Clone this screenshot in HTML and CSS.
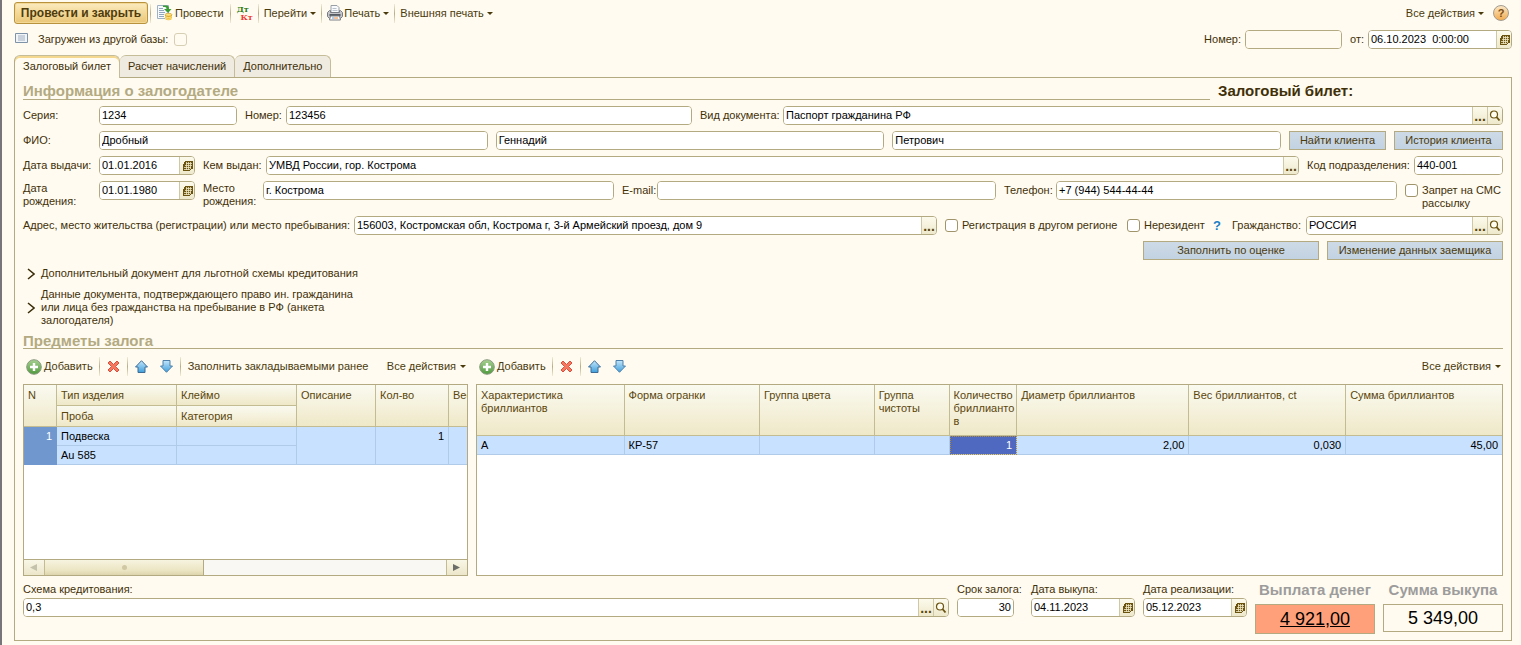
FILE: index.html
```html
<!DOCTYPE html>
<html lang="ru">
<head>
<meta charset="utf-8">
<title>Залоговый билет</title>
<link rel="stylesheet" href="styles.css">
</head>
<body>
<svg class="defs" aria-hidden="true">
  <defs>
    <linearGradient id="g-green" x1="0" y1="0" x2="0" y2="1"><stop offset="0" stop-color="#a9d192"/><stop offset="1" stop-color="#4f9a3c"/></linearGradient>
    <linearGradient id="g-blue" x1="0" y1="0" x2="0" y2="1"><stop offset="0" stop-color="#c3e6fb"/><stop offset="1" stop-color="#3f9edb"/></linearGradient>
  </defs>
  <symbol id="i-cal" viewBox="0 0 11 12"><path fill="#6b5310" d="M3 1h8v8H9v1H8v1H1V4h1V2h1z"/><path stroke="#efe7c4" d="M4 3.500h6M3 5.500h7M2 7.500h7M2 9.500h6M4.500 2v8M6.500 2v8M8.500 2v7" stroke-width=".8"/></symbol>
  <symbol id="i-mag" viewBox="0 0 12 12"><circle cx="5" cy="4.500" r="3.500" fill="#fffdf0" stroke="#6b5310" stroke-width="1.200"/><path d="M7.500 7l3 3.500" stroke="#6b5310" stroke-width="1.900"/></symbol>
  <symbol id="i-add" viewBox="0 0 16 16"><circle cx="8" cy="8" r="7.300" fill="url(#g-green)" stroke="#8a9a80"/><path d="M8 4v8M4 8h8" stroke="#fff" stroke-width="2.400"/></symbol>
  <symbol id="i-del" viewBox="0 0 13 13"><path d="M1 3l2-2 3.500 3.500L10 1l2 2-3.500 3.500L12 10l-2 2-3.500-3.500L3 12l-2-2 3.500-3.500z" fill="#f4775f" stroke="#d9503f"/></symbol>
  <symbol id="i-up" viewBox="0 0 13 13"><path d="M6.500 .700L12.500 7H10v5.500H3V7H.500z" fill="url(#g-blue)" stroke="#3d6c96" stroke-linejoin="round"/></symbol>
  <symbol id="i-down" viewBox="0 0 13 13"><path d="M6.500 12.300L12.500 6H10V.500H3V6H.500z" fill="url(#g-blue)" stroke="#4d80aa" stroke-linejoin="round"/></symbol>
  <symbol id="i-chev" viewBox="0 0 8 12"><path d="M1 1l6 5-6 5" fill="none" stroke="#3a2c08" stroke-width="1.500"/></symbol>
  <symbol id="i-post" viewBox="0 0 16 16"><path d="M.500 .500h11v13H.500z" fill="#f7fafc" stroke="#9fb2c3"/><path d="M2 3.500h4M2 5.500h5M2 7.500h6M2 9.500h5M2 11.500h5" stroke="#8fa6bc"/><path d="M6 .500h3.500q2.500 0 2.500 3.500h2.500l-3.500 4-4-4h2.500Q9.500 2 8 2H6z" fill="#3b9b35"/><path d="M8 10v4q3.500 2.500 7 0v-4z" fill="#eab52e"/><ellipse cx="11.500" cy="9.800" rx="3.500" ry="1.500" fill="#fbe27a" stroke="#c98f1c" stroke-width=".6"/><path d="M8 11.800q3.500 1.600 7 0M8 13.500q3.500 1.600 7 0" fill="none" stroke="#fff0a0" stroke-width=".8"/></symbol>
  <symbol id="i-print" viewBox="0 0 16 16"><path d="M4 .500h6l2 2V8H4z" fill="#f8fafc" stroke="#9a9ea5"/><path d="M5.500 3.500h4M5.500 5.500h5" stroke="#b9c2cc"/><path d="M.500 7.500l2-2h1v2h9v-2h1l2 2v4l-2 2h-11l-2-2z" fill="#c3c5ca" stroke="#777b82"/><path d="M2.500 9h11v2h-11z" fill="#565a62"/><path d="M3.500 11h9l1 4h-11z" fill="#fff" stroke="#7d8187"/><path d="M5 13h2" stroke="#5d9adf"/><path d="M7 13h4" stroke="#ee8a3a"/></symbol>
  <symbol id="i-list" viewBox="0 0 13 10"><path d="M.5.500h12v9H.5z" fill="#f2f5f8" stroke="#7e93a8"/><path d="M3 3h7M3 5h7M3 7h7" stroke="#8da0b2" stroke-width=".8"/></symbol>
  <symbol id="i-prev" viewBox="0 0 8 7"><path d="M7 0v7L0 3.500z" fill="#c5c2ac"/></symbol>
  <symbol id="i-next" viewBox="0 0 8 7"><path d="M0 0v7l7-3.500z" fill="#6c6c68"/></symbol>
</svg>

<header class="toolbar">
  <button class="primary">Провести и закрыть</button>
  <i class="sep"></i>
  <button class="cmd"><svg class="ic16"><use href="#i-post"/></svg>Провести</button>
  <i class="sep"></i>
  <button class="dtkt"><span class="dt">Дт</span><span class="kt">Кт</span></button>
  <i class="sep"></i>
  <button class="cmd menu">Перейти</button>
  <i class="sep"></i>
  <button class="cmd menu"><svg class="ic16"><use href="#i-print"/></svg>Печать</button>
  <i class="sep"></i>
  <button class="cmd menu">Внешняя печать</button>
  <button class="cmd menu push">Все действия</button>
  <button class="help">?</button>
</header>

<div class="docline">
  <svg class="listicon"><use href="#i-list"/></svg>
  <label class="check loaded">Загружен из другой базы:<input type="checkbox" disabled></label>
  <div class="field push"><label for="num">Номер:</label><span class="box off docnum"><input id="num" readonly></span></div>
  <div class="field"><label for="dt">от:</label><span class="box docdate"><input id="dt" value="06.10.2023  0:00:00"><button aria-label="Календарь"><svg class="cal"><use href="#i-cal"/></svg></button></span></div>
</div>

<nav class="tabs">
  <button class="tab active">Залоговый билет</button><button class="tab">Расчет начислений</button><button class="tab">Дополнительно</button>
</nav>

<main class="panel">
  <div class="titles">
    <h2 class="section">Информация о залогодателе</h2>
    <h2 class="ticket">Залоговый билет:</h2>
  </div>

  <div class="row">
    <div class="field serial"><label class="l76" for="ser">Серия:</label><span class="box"><input id="ser" value="1234"></span></div>
    <div class="field g447"><label class="l41" for="pnum">Номер:</label><span class="box"><input id="pnum" value="123456"></span></div>
    <div class="field g803"><label class="l83" for="kind">Вид документа:</label><span class="box"><input id="kind" value="Паспорт гражданина РФ"><button class="dots" aria-label="Выбрать">...</button><button aria-label="Открыть"><svg class="mag"><use href="#i-mag"/></svg></button></span></div>
  </div>

  <div class="row">
    <div class="field name"><label class="l76" for="fam">ФИО:</label><span class="box"><input id="fam" value="Дробный"></span></div>
    <div class="field grow"><span class="box"><input aria-label="Имя" value="Геннадий"></span></div>
    <div class="field grow"><span class="box"><input aria-label="Отчество" value="Петрович"></span></div>
    <button class="blue find">Найти клиента</button>
    <button class="blue hist">История клиента</button>
  </div>

  <div class="row">
    <div class="field date"><label class="l76" for="iss">Дата выдачи:</label><span class="box"><input id="iss" value="01.01.2016"><button aria-label="Календарь"><svg class="cal"><use href="#i-cal"/></svg></button></span></div>
    <div class="field grow"><label class="l63" for="by">Кем выдан:</label><span class="box"><input id="by" value="УМВД России, гор. Кострома"><button class="dots" aria-label="Выбрать">...</button></span></div>
    <div class="field code"><label for="code">Код подразделения:</label><span class="box"><input id="code" value="440-001"></span></div>
  </div>

  <div class="row tall">
    <div class="field date"><label class="l76" for="born">Дата<br>рождения:</label><span class="box"><input id="born" value="01.01.1980"><button aria-label="Календарь"><svg class="cal"><use href="#i-cal"/></svg></button></span></div>
    <div class="field g411"><label class="l60" for="place">Место<br>рождения:</label><span class="box"><input id="place" value="г. Кострома"></span></div>
    <div class="field g374"><label class="l35 mid" for="mail">E-mail:</label><span class="box"><input id="mail"></span></div>
    <div class="field g393"><label class="l52 mid" for="tel">Телефон:</label><span class="box"><input id="tel" value="+7 (944) 544-44-44"></span></div>
    <label class="check sms"><input type="checkbox"><span>Запрет на СМС<br>рассылку</span></label>
  </div>

  <div class="row">
    <div class="field grow"><label class="l331" for="addr">Адрес, место жительства (регистрации) или место пребывания:</label><span class="box"><input id="addr" value="156003, Костромская обл, Кострома г, 3-й Армейский проезд, дом 9"><button class="dots" aria-label="Выбрать">...</button></span></div>
    <label class="check region"><input type="checkbox">Регистрация в другом регионе</label>
    <label class="check nonres"><input type="checkbox">Нерезидент</label>
    <a class="hint" href="#">?</a>
    <div class="field citizen"><label class="l74" for="cit">Гражданство:</label><span class="box"><input id="cit" value="РОССИЯ"><button class="dots" aria-label="Выбрать">...</button><button aria-label="Открыть"><svg class="mag"><use href="#i-mag"/></svg></button></span></div>
  </div>

  <div class="row end">
    <button class="blue wide">Заполнить по оценке</button>
    <button class="blue wide">Изменение данных заемщика</button>
  </div>

  <div class="expanders">
    <button class="expander"><svg class="chev"><use href="#i-chev"/></svg><span>Дополнительный документ для льготной схемы кредитования</span></button>
    <button class="expander"><svg class="chev"><use href="#i-chev"/></svg><span>Данные документа, подтверждающего право ин. гражданина<br>или лица без гражданства на пребывание в РФ (анкета<br>залогодателя)</span></button>
  </div>

  <h2 class="section items">Предметы залога</h2>

  <div class="lists">
    <section class="list goods">
      <div class="bar">
        <button class="cmd add"><svg class="ic16"><use href="#i-add"/></svg>Добавить</button>
        <i class="sep"></i>
        <button class="icon" aria-label="Удалить"><svg class="ic13"><use href="#i-del"/></svg></button>
        <i class="sep"></i>
        <button class="icon" aria-label="Вверх"><svg class="ic13"><use href="#i-up"/></svg></button>
        <button class="icon" aria-label="Вниз"><svg class="ic13"><use href="#i-down"/></svg></button>
        <i class="sep"></i>
        <button class="cmd">Заполнить закладываемыми ранее</button>
        <button class="cmd menu push">Все действия</button>
      </div>
      <div class="frame">
        <div class="view">
          <table class="t-goods">
            <colgroup><col class="c-n"><col class="c-type"><col class="c-type"><col class="c-desc"><col class="c-qty"><col class="c-w"></colgroup>
            <thead>
              <tr><th rowspan="2">N</th><th>Тип изделия</th><th>Клеймо</th><th rowspan="2">Описание</th><th rowspan="2">Кол-во</th><th rowspan="2">Вес</th></tr>
              <tr><th>Проба</th><th>Категория</th></tr>
            </thead>
            <tbody>
              <tr><td rowspan="2" class="rown">1</td><td>Подвеска</td><td></td><td rowspan="2"></td><td rowspan="2" class="num">1</td><td rowspan="2"></td></tr>
              <tr><td>Au 585</td><td></td></tr>
            </tbody>
          </table>
        </div>
        <div class="scroll">
          <button aria-label="Влево"><svg class="arr"><use href="#i-prev"/></svg></button>
          <div class="track"><div class="thumb"><i></i></div></div>
          <button aria-label="Вправо"><svg class="arr"><use href="#i-next"/></svg></button>
        </div>
      </div>
    </section>

    <section class="list gems">
      <div class="bar">
        <button class="cmd add"><svg class="ic16"><use href="#i-add"/></svg>Добавить</button>
        <i class="sep"></i>
        <button class="icon" aria-label="Удалить"><svg class="ic13"><use href="#i-del"/></svg></button>
        <i class="sep"></i>
        <button class="icon" aria-label="Вверх"><svg class="ic13"><use href="#i-up"/></svg></button>
        <button class="icon" aria-label="Вниз"><svg class="ic13"><use href="#i-down"/></svg></button>
        <button class="cmd menu push">Все действия</button>
      </div>
      <div class="frame">
        <div class="view">
          <table class="t-gems">
            <colgroup><col class="k1"><col class="k2"><col class="k3"><col class="k4"><col class="k5"><col class="k6"><col class="k7"><col class="k8"></colgroup>
            <thead><tr><th>Характеристика<br>бриллиантов</th><th>Форма огранки</th><th>Группа цвета</th><th>Группа<br>чистоты</th><th>Количество<br>бриллианто<br>в</th><th>Диаметр бриллиантов</th><th>Вес бриллиантов, ct</th><th>Сумма бриллиантов</th></tr></thead>
            <tbody><tr><td>А</td><td>КР-57</td><td></td><td></td><td class="num cur">1</td><td class="num">2,00</td><td class="num">0,030</td><td class="num">45,00</td></tr></tbody>
          </table>
        </div>
      </div>
    </section>
  </div>

  <footer class="bottom">
    <div class="stack grow"><label for="plan">Схема кредитования:</label><span class="box"><input id="plan" value="0,3"><button class="dots" aria-label="Выбрать">...</button><button aria-label="Открыть"><svg class="mag"><use href="#i-mag"/></svg></button></span></div>
    <div class="stack term"><label for="term">Срок залога:</label><span class="box"><input id="term" class="right" value="30"></span></div>
    <div class="stack due"><label for="due">Дата выкупа:</label><span class="box"><input id="due" value="04.11.2023"><button aria-label="Календарь"><svg class="cal"><use href="#i-cal"/></svg></button></span></div>
    <div class="stack due"><label for="sale">Дата реализации:</label><span class="box"><input id="sale" value="05.12.2023"><button aria-label="Календарь"><svg class="cal"><use href="#i-cal"/></svg></button></span></div>
    <div class="total pay"><span>Выплата денег</span><a href="#">4 921,00</a></div>
    <div class="total"><span>Сумма выкупа</span><output>5 349,00</output></div>
  </footer>
</main>
</body>
</html>
```

FILE: styles.css
```css
* { box-sizing: border-box; }

body {
  margin: 0;
  min-height: 100vh;
  display: flex;
  flex-direction: column;
  padding: 2px 9px 4px 12px;
  border-left: 2px solid #77757a;
  background: #fffbf0;
  color: #3f3008;
  font: 11px/13px "Liberation Sans", Arial, sans-serif;
}

button, input { font: inherit; color: inherit; }
button { margin: 0; padding: 0; border: 0; background: none; white-space: nowrap; }
h2 { margin: 0; font-size: 15px; line-height: 16px; }
label { white-space: nowrap; }
.defs { position: absolute; width: 0; height: 0; }
svg { display: block; flex: none; }
.ic16 { width: 16px; height: 16px; }
.ic13 { width: 13px; height: 13px; }
.cal { width: 11px; height: 12px; }
.mag { width: 12px; height: 12px; }
.push { margin-left: auto; }
.grow { flex: 1 1 0; }

/* command bars */
.toolbar { display: flex; align-items: center; height: 22px; }
.primary {
  width: 134px;
  height: 22px;
  border: 1px solid #b8923c;
  border-radius: 3px;
  background: linear-gradient(#fbecc0, #f1d592 60%, #e9c678);
  box-shadow: inset 0 0 0 1px #f3d896;
  color: #4f3c0c;
  font-size: 12px;
  font-weight: bold;
}
.sep { flex: none; width: 1px; height: 19px; margin: 0 6px 0 2px; background: linear-gradient(#f2ecd6, #b7af87, #f2ecd6); }
.cmd { display: flex; align-items: center; gap: 2px; height: 20px; color: #4a3a0c; }
.toolbar .cmd + .sep { margin-left: 6px; }
.toolbar .menu + .sep { margin-left: 5px; }
.toolbar .menu { gap: 1px; }
.toolbar .menu + .sep, .dtkt + .sep { margin-right: 5px; }
.dtkt + .sep { margin-left: 5px; }
.menu::after { content: ""; margin-left: 2px; border: 3px solid transparent; border-top-color: #4a3a0c; border-bottom: 0; }
.dtkt { display: flex; flex-direction: column; width: 16px; font: bold 8px/8px "DejaVu Serif", serif; }
.dt { color: #2c7a10; text-align: left; }
.kt { color: #ee3b35; text-align: right; }
.help {
  width: 16px;
  height: 16px;
  margin: 0 3px 0 9px;
  border: 1px solid #a39b8e;
  border-radius: 50%;
  background: linear-gradient(#fbe6c4, #f3ac50);
  font-weight: bold;
  line-height: 14px;
  color: #7b4d12;
}

.docline { display: flex; align-items: center; gap: 8px; margin-top: 6px; height: 19px; }
.listicon { width: 13px; height: 10px; margin: 0 2px 4px 1px; }
.docline .field label { margin-right: 4px; }
.docline .loaded { gap: 6px; }
.docnum { width: 97px; }
.docdate { width: 144px; }

/* fields */
.field { display: flex; min-width: 0; align-items: center; }
.box {
  display: flex;
  flex: 1 1 0;
  min-width: 0;
  height: 19px;
  overflow: hidden;
  border: 1px solid #b3aa82;
  border-radius: 4px;
  background: #fff;
}
.box.docnum, .box.docdate { flex: none; }
.box.off, .box.off input { background: #fffbf0; }
.box input { flex: 1 1 0; width: 0; min-width: 0; padding: 0 2px; border: 0; outline: 0; background: #fff; color: #000; white-space: pre; }
.box input.right { text-align: right; }
.box button {
  display: flex;
  align-items: center;
  justify-content: center;
  width: 15px;
  border-left: 1px solid #cfc8a6;
  background: linear-gradient(#fcfaec, #eee9cc);
  color: #5b460c;
}
.box .dots { align-items: flex-end; font-size: 14px; line-height: 16px; font-weight: bold; }
.check { display: flex; align-items: center; gap: 4px; }
.check input {
  appearance: none;
  flex: none;
  width: 13px;
  height: 13px;
  margin: 0;
  border: 1px solid #a0956a;
  border-radius: 3px;
  background: #fff;
}
.check input:disabled { border-color: #d6cfb4; background: #fffbf0; }

.tabs { display: flex; margin-top: 6px; height: 22px; }
.tab {
  padding: 0 8px;
  border: 1px solid #c5bd98;
  border-bottom: 0;
  border-left: 0;
  border-radius: 6px 6px 0 0;
  background: #f0ebe0;
}
.tab.active {
  height: 23px;
  padding-bottom: 1px;
  z-index: 1;
  border-left: 1px solid #b3aa82;
  background: #fffbf0;
  box-shadow: inset 0 2px #f5d890;
}

.panel {
  flex: 1;
  display: flex;
  flex-direction: column;
  gap: 6px;
  padding: 0 8px 6px;
  border: 1px solid #b3aa82;
}
.titles { display: flex; gap: 8px; height: 22px; }
.section { flex: 1; border-bottom: 1px solid #b3aa82; color: #b3aa82; }
.titles h2 { padding-top: 5px; }
.ticket { width: 285px; color: #3f3008; }
.section.items { flex: none; height: 15px; line-height: 14px; }

.row { display: flex; gap: 8px; min-height: 19px; }
.row.tall { min-height: 29px; }
.tall .field, .tall .check { align-items: flex-start; }
.tall label { padding-top: 1px; }
.tall .mid { padding-top: 3px; }
.row.end { justify-content: flex-end; }
.l35 { width: 35px; } .l41 { width: 41px; } .l52 { width: 52px; } .l60 { width: 60px; }
.l63 { width: 63px; } .l74 { width: 74px; } .l76 { width: 76px; } .l83 { width: 83px; } .l331 { width: 331px; }
.serial { width: 214px; }
.date { width: 172px; }
.code { width: 196px; }
.code label { width: 107px; }
.citizen { width: 271px; }
.g447 { flex: 447 1 0; } .g803 { flex: 803 1 0; }
.g411 { flex: 411 1 0; } .g374 { flex: 374 1 0; } .g393 { flex: 393 1 0; }
.name { flex: 1 1 76px; }
.row .sms { width: 98px; padding-top: 3px; }
.region { width: 174px; }
.nonres { width: 78px; }
.hint { width: 11px; color: #1b7fc4; font-size: 13px; font-weight: bold; line-height: 19px; text-decoration: none; }
.blue {
  height: 19px;
  border: 1px solid #b3aa82;
  background: linear-gradient(#cddae6, #c3d2e2);
  color: #4a3a0c;
}
.find { width: 97px; }
.hist { width: 109px; }
.wide { width: 176px; }

.expanders { display: flex; flex-direction: column; gap: 8px; height: 62px; padding: 1px 0 0 4px; }
.expander { display: flex; align-items: center; gap: 6px; text-align: left; color: #3f3008; }
.chev { width: 8px; height: 12px; }

/* lists */
.lists { flex: 1; display: flex; gap: 8px; }
.list { display: flex; flex-direction: column; gap: 6px; min-width: 0; }
.goods { width: 445px; flex: none; }
.gems { flex: 1; }
.bar { display: flex; align-items: center; height: 23px; padding: 0 2px 0 3px; }
.icon { width: 13px; height: 13px; margin-right: 12px; }
.icon + .sep { margin-left: -5px; }
.bar .sep { margin-right: 7px; }
.bar .add + .sep { margin-left: 6px; }
.frame { flex: 1; display: flex; flex-direction: column; border: 1px solid #b3aa82; background: #fff; }
.view { flex: 1; overflow: hidden; }
table { table-layout: fixed; border-collapse: separate; border-spacing: 0; }
.t-goods { width: 464px; }
.t-gems { width: 100%; }
th {
  padding: 4px 4px 0;
  border-right: 1px solid #c3bb92;
  border-bottom: 1px solid #c3bb92;
  background: linear-gradient(#fafaf0, #efe8c8);
  color: #5b460c;
  font-weight: normal;
  text-align: left;
  vertical-align: top;
  white-space: nowrap;
}
td {
  padding: 3px 4px 0;
  border-right: 1px solid #b0cbe9;
  border-bottom: 1px solid #b0cbe9;
  background: #c8e1ff;
  color: #000;
  vertical-align: top;
}
.t-goods th { height: 21px; }
.t-goods td { height: 19px; }
.t-gems th { height: 51px; }
.t-gems td { height: 19px; }
.t-gems th:last-child, .t-gems td:last-child { border-right: 0; }
.num, .rown { text-align: right; }
.rown { background: #7098cf; color: #fff; border-color: #7098cf; }
.cur { background: #5069c0; color: #fff; outline: 1px dotted #b08a3a; outline-offset: -1px; }
.c-n { width: 33px; } .c-type { width: 120px; } .c-desc { width: 79px; } .c-qty { width: 73px; } .c-w { width: 39px; }
.k1 { width: 14.4%; } .k2 { width: 13.2%; } .k3 { width: 11.2%; } .k4 { width: 7.3%; }
.k5 { width: 6.6%; } .k6 { width: 16.8%; } .k7 { width: 15.3%; } .k8 { width: 15.2%; }

.scroll { display: flex; height: 16px; border-top: 1px solid #b3aa82; background: #faf8f2; }
.scroll button { display: flex; align-items: center; justify-content: center; width: 21px; background: linear-gradient(#f8f6e6, #ece6ca); }
.scroll button:first-child { border-right: 1px solid #c3bb92; }
.scroll button:last-child { border-left: 1px solid #c3bb92; }
.arr { width: 8px; height: 7px; }
.track { flex: 1; }
.thumb { display: flex; align-items: center; justify-content: center; width: 159px; height: 15px; border-right: 1px solid #b3aa82; background: linear-gradient(#f6f3df, #ece5c3 70%, #ddd5ac); }
.thumb i { width: 5px; height: 5px; border-radius: 50%; background: #cfc8a2; }

/* totals */
.bottom { display: flex; gap: 8px; height: 52px; }
.stack { display: flex; flex-direction: column; gap: 2px; padding-top: 1px; min-width: 0; }
.stack .box { flex: none; }
.term { width: 66px; }
.term .box { width: 57px; }
.due { width: 104px; }
.total { display: flex; flex-direction: column; gap: 6px; width: 120px; text-align: center; font-size: 18px; line-height: 26px; color: #000; }
.total span { font-size: 15px; line-height: 16px; font-weight: bold; color: #9c9c9c; white-space: nowrap; }
.total output { height: 28px; border: 1px solid #b3aa82; }
.total a { height: 30px; border: 1px solid #b3aa82; background: #ffa07a; color: #000; line-height: 28px; }
```
